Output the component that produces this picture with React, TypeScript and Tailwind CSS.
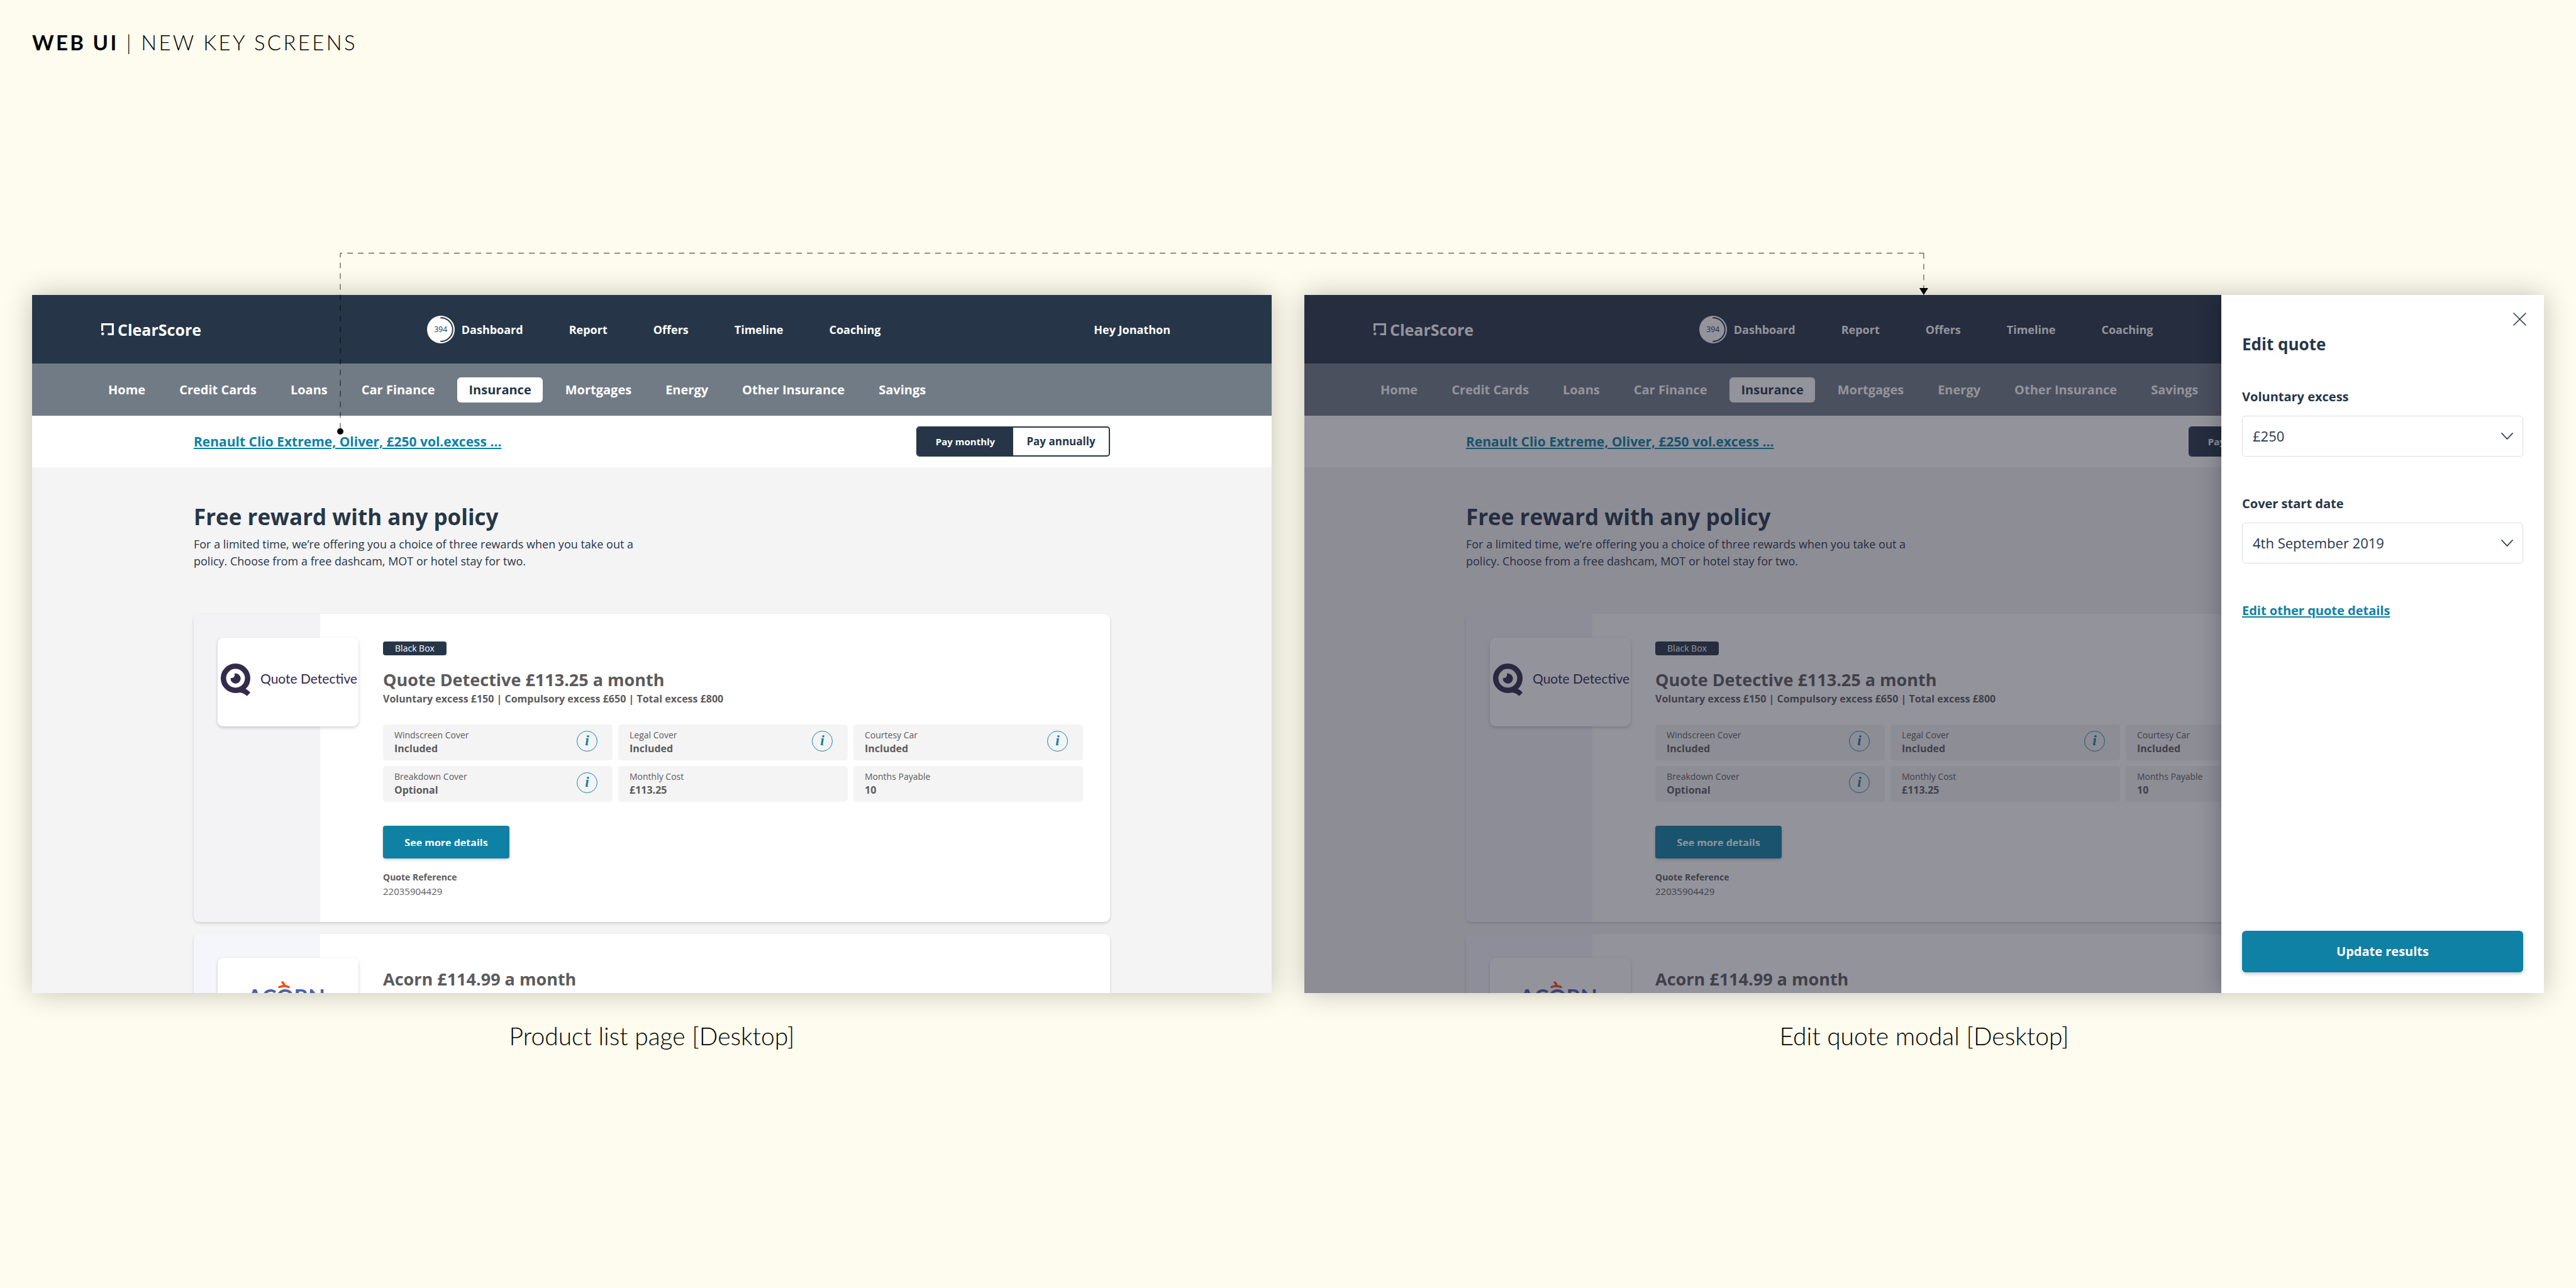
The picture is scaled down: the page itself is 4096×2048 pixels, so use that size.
import React from "react";

const NAV = ["Report", "Offers", "Timeline", "Coaching"];
const CATEGORIES = [
  "Home",
  "Credit Cards",
  "Loans",
  "Car Finance",
  "Insurance",
  "Mortgages",
  "Energy",
  "Other Insurance",
  "Savings",
];

type Feature = { label: string; value: string; info?: boolean };

type Quote = { features: Feature[]; reference: string };

const QUOTE_DETECTIVE: Quote = {
  reference: "22035904429",
  features: [
    { label: "Windscreen Cover", value: "Included", info: true },
    { label: "Legal Cover", value: "Included", info: true },
    { label: "Courtesy Car", value: "Included", info: true },
    { label: "Breakdown Cover", value: "Optional", info: true },
    { label: "Monthly Cost", value: "£113.25" },
    { label: "Months Payable", value: "10" },
  ],
};

function BrandMark() {
  return (
    <svg viewBox="0 0 20 19" className="h-[19px] w-5" fill="#fff" aria-hidden="true">
      <path d="M0 0H20V19H10.500V15.700H16.800V3.200H3.100V12H0Z" />
      <circle cx="2.300" cy="16.700" r="2.300" />
    </svg>
  );
}

function ScoreDial() {
  return (
    <span className="relative flex size-11 items-center justify-center">
      <svg viewBox="0 0 44 44" className="absolute inset-0 size-11" aria-hidden="true">
        <circle cx="22" cy="22" r="22" fill="#fff" />
        <path d="M22 3.200A18.800 18.800 0 0 1 22 40.800" fill="none" stroke="#263648" strokeWidth="2" strokeLinecap="round" />
      </svg>
      <span className="relative text-xs leading-none font-normal text-[#263648]">394</span>
    </span>
  );
}

function QuoteDetectiveLogo() {
  return (
    <span className="flex items-center gap-4 pb-2 pl-[5px]">
      <svg viewBox="0 0 66 73" className="h-[52px] w-[47px] shrink-0" aria-hidden="true">
        <circle cx="33" cy="33" r="27" fill="none" stroke="#322b4b" strokeWidth="12" />
        <path d="M30 59.500C40 59 46 60 51 57L54.500 56C58 57.500 62 60 66 65L58.500 72.500C52 67.500 48 65 40 65L30 65Z" fill="#322b4b" />
        <path d="M31 22.500A11.300 11.300 0 1 1 22 32.500Q26 33 29.500 30.500Q32 27.500 31 22.500Z" fill="#322b4b" />
      </svg>
      <span className="pb-1 font-['Lato',sans-serif] text-[21px] leading-6 whitespace-nowrap text-[#322b4b]">
        Quote Detective
      </span>
    </span>
  );
}

function AcornLogo() {
  return (
    <svg viewBox="0 0 224 140" className="h-[140px] w-[224px]" aria-label="Acorn" role="img">
      <path d="M98 45.500Q106 42 113 45.500" fill="none" stroke="#fe4a0c" strokeWidth="3.500" strokeLinecap="round" />
      <path d="M103 38Q106 40 106 44" fill="none" stroke="#fe4a0c" strokeWidth="3.500" strokeLinecap="round" />
      <text x="47" y="74" fontFamily="Lato, sans-serif" fontWeight="700" fontSize="35" fill="#4a5fb4">
        ACORN
      </text>
    </svg>
  );
}

function InfoButton({ label }: { label: string }) {
  return (
    <button
      type="button"
      aria-label={`About ${label}`}
      className="mt-[3px] flex size-[33px] items-center justify-center rounded-full border border-[#1586a8] pb-[2px] font-['Liberation_Serif',serif] text-[23px] leading-none font-bold text-[#0f81a4] italic"
    >
      i
    </button>
  );
}

function QuoteCard({
  title,
  badge,
  stripClass,
  logo,
  quote,
}: {
  title: string;
  badge?: string;
  stripClass: string;
  logo: React.ReactNode;
  quote?: Quote;
}) {
  return (
    <article className="relative flex rounded-[9px] bg-white text-[#5b5b5b] shadow-[0_2px_4px_rgba(0,0,0,0.16)]">
      <div className={`w-[201px] shrink-0 rounded-l-[9px] pt-[38px] pl-[38px] ${stripClass}`}>
        <div className="relative flex h-[141px] w-[224px] items-center rounded-[9px] bg-white shadow-[0_2px_5px_rgba(0,0,0,0.2)]">
          {logo}
        </div>
      </div>
      <div className={`min-w-0 flex-1 pr-[43px] pb-[38px] pl-[100px] ${badge ? "pt-11" : "pt-14"}`}>
        {badge && (
          <span className="mb-[23px] flex h-[22px] w-[101px] items-center justify-center rounded bg-[#263648] text-sm leading-none text-white">
            {badge}
          </span>
        )}
        <h3 className="text-[27px] leading-8 font-bold">{title}</h3>
        <p className="mt-1 text-base leading-5 font-bold">
          Voluntary excess £150 | Compulsory excess £650 | Total excess £800
        </p>
        {quote && (
          <>
            <dl className="mt-[31px] grid grid-cols-3 gap-[9px]">
              {quote.features.map((f) => (
                <div key={f.label} className="flex justify-between rounded-[5px] bg-[#f4f4f4] py-[7px] pr-6 pl-[18px]">
                  <div>
                    <dt className="text-sm leading-5">{f.label}</dt>
                    <dd className="text-base leading-[23px] font-bold">{f.value}</dd>
                  </div>
                  {f.info && <InfoButton label={f.label} />}
                </div>
              ))}
            </dl>
            <button
              type="button"
              className="mt-[38px] flex h-[52px] w-[201px] items-center justify-center rounded bg-[#0f81a4] text-base font-bold text-white shadow-[0_2px_4px_rgba(0,0,0,0.2)]"
            >
              <span className="block h-[11px] overflow-hidden leading-6">
                <span className="-mt-[6px] block">See more details</span>
              </span>
            </button>
            <p className="mt-[19px] text-sm leading-[22px] font-bold">Quote Reference</p>
            <p className="text-[15px] leading-[22px]">{quote.reference}</p>
          </>
        )}
      </div>
    </article>
  );
}

function ProductPage() {
  return (
    <div className="font-['Open_Sans',sans-serif] text-[#263648]">
      <header className="flex h-[109px] items-center justify-between bg-[#263648] pr-[161px] pl-[110px] text-lg font-bold text-white">
        <a href="#home" className="flex items-center gap-[6px] pr-5 text-[25px] leading-8">
          <BrandMark />
          ClearScore
        </a>
        <nav className="flex items-center gap-[73px]">
          <a href="#dashboard" className="flex items-center gap-[11px]">
            <ScoreDial />
            Dashboard
          </a>
          {NAV.map((n) => (
            <a key={n} href={`#${n.toLowerCase()}`}>
              {n}
            </a>
          ))}
        </nav>
        <a href="#account">Hey Jonathon</a>
      </header>
      <nav className="flex h-[83px] items-center gap-[18px] bg-[#717b85] pl-[103px] text-xl font-bold whitespace-nowrap text-white">
        {CATEGORIES.map((c) =>
          c === "Insurance" ? (
            <a key={c} href="#insurance" aria-current="page" className="rounded-md bg-white px-[18px] py-[6px] text-[#263648]">
              {c}
            </a>
          ) : (
            <a key={c} href="#category" className="px-[18px] py-[6px]">
              {c}
            </a>
          ),
        )}
      </nav>
      <div className="flex h-[82px] items-center justify-between bg-white px-[257px]">
        <a href="#quote" className="text-[21px] leading-7 font-bold text-[#0f81a4] underline decoration-2 underline-offset-2">
          Renault Clio Extreme, Oliver, £250 vol.excess ...
        </a>
        <div className="grid h-12 w-[308px] grid-cols-2 overflow-hidden rounded-[5px] border-2 border-[#263648] font-bold">
          <button type="button" aria-pressed="true" className="bg-[#263648] text-[15px] text-white">
            Pay monthly
          </button>
          <button type="button" aria-pressed="false" className="text-[17px]">
            Pay annually
          </button>
        </div>
      </div>
      <main className="bg-[#f4f4f4] px-[257px] pt-[59px]">
        <h2 className="text-[35px] leading-10 font-bold">Free reward with any policy</h2>
        <p className="mt-[10px] max-w-[740px] text-lg leading-[27px]">
          For a limited time, we’re offering you a choice of three rewards when you take out a policy. Choose from a free
          dashcam, MOT or hotel stay for two.
        </p>
        <div className="mt-[70px] flex flex-col gap-[19px]">
          <QuoteCard
            title="Quote Detective £113.25 a month"
            badge="Black Box"
            stripClass="bg-[#f3f3f5]"
            logo={<QuoteDetectiveLogo />}
            quote={QUOTE_DETECTIVE}
          />
          <QuoteCard title="Acorn £114.99 a month" stripClass="bg-[#f5f6fb]" logo={<AcornLogo />} />
        </div>
      </main>
    </div>
  );
}

function SelectField({ id, label, value }: { id: string; label: string; value: string }) {
  return (
    <div>
      <label htmlFor={id} className="block text-xl leading-7 font-bold">
        {label}
      </label>
      <div className="relative mt-4">
        <select
          id={id}
          defaultValue={value}
          className="block h-[65px] w-full appearance-none rounded-[5px] border border-[#dcdddf] bg-white pr-14 pl-4 text-[22px]"
        >
          <option>{value}</option>
        </select>
        <svg
          viewBox="0 0 19 11"
          className="pointer-events-none absolute top-[27px] right-4 h-[11px] w-[19px]"
          fill="none"
          stroke="#263648"
          strokeWidth="1.800"
          strokeLinecap="round"
          strokeLinejoin="round"
          aria-hidden="true"
        >
          <path d="M1 1L9.500 10L18 1" />
        </svg>
      </div>
    </div>
  );
}

function EditQuotePanel() {
  return (
    <aside
      role="dialog"
      aria-label="Edit quote"
      className="absolute inset-y-0 right-0 flex w-[513px] flex-col bg-white px-[33px] pt-7 pb-[33px] font-['Open_Sans',sans-serif] text-[#263648] shadow-[0_0_36px_rgba(0,0,0,0.3)]"
    >
      <button type="button" aria-label="Close" className="-mr-[5px] size-[21px] self-end">
        <svg viewBox="0 0 21 21" className="size-[21px]" stroke="#263648" strokeWidth="1.500" strokeLinecap="round" aria-hidden="true">
          <path d="M1 1L20 20M20 1L1 20" />
        </svg>
      </button>
      <h2 className="mt-[13px] text-[26px] leading-8 font-bold">Edit quote</h2>
      <div className="mt-[54px] flex flex-col gap-[61px]">
        <SelectField id="voluntary-excess" label="Voluntary excess" value="£250" />
        <SelectField id="cover-start" label="Cover start date" value="4th September 2019" />
        <a href="#details" className="self-start text-xl leading-7 font-bold text-[#0f81a4] underline decoration-2 underline-offset-2">
          Edit other quote details
        </a>
      </div>
      <button
        type="button"
        className="mt-auto h-[66px] w-full rounded-md bg-[#0f81a4] text-xl font-bold text-white shadow-[0_3px_5px_rgba(0,0,0,0.2)]"
      >
        Update results
      </button>
    </aside>
  );
}

function Frame({ caption, children }: { caption: string; children: React.ReactNode }) {
  return (
    <figure className="min-w-0 flex-1">
      <div className="relative aspect-[1971/1110] overflow-hidden bg-[#f4f4f4] shadow-[0_0_42px_rgba(0,0,0,0.24)]">{children}</div>
      <figcaption className="mt-[46px] text-center text-[39px] leading-[44px] font-light text-black">{caption}</figcaption>
    </figure>
  );
}

/* Dashed flow line from the quote link up and across to the modal screen. */
function Connector() {
  return (
    <svg className="pointer-events-none absolute inset-x-0 -top-[67px] h-[290px] w-full" aria-hidden="true">
      <g stroke="#000" strokeOpacity="0.8" strokeDasharray="9 8">
        <line x1="12.270%" y1="0.500" x2="12.270%" y2="284" strokeDashoffset="2" />
        <line x1="12.270%" y1="0.500" x2="75.310%" y2="0.500" strokeDashoffset="6" />
        <line x1="75.310%" y1="0.500" x2="75.310%" y2="58" />
      </g>
      <circle cx="12.270%" cy="284" r="5" />
      <svg x="75.310%" y="56" className="overflow-visible">
        <path d="M-7 0H7L0 11Z" />
      </svg>
    </svg>
  );
}

export default function App() {
  return (
    <div className="min-h-screen bg-[#fefcee] px-[51px] pt-[47px] font-['Lato',sans-serif]">
      <h1 className="text-[33px] leading-10 font-light tracking-widest text-black">
        <strong className="font-bold">WEB UI</strong> | NEW KEY SCREENS
      </h1>
      <div className="relative mt-[382px] flex gap-[52px]">
        <Frame caption="Product list page [Desktop]">
          <ProductPage />
        </Frame>
        <Frame caption="Edit quote modal [Desktop]">
          <ProductPage />
          <div className="absolute inset-0 bg-[rgb(36_36_54/0.493)]" />
          <EditQuotePanel />
        </Frame>
        <Connector />
      </div>
    </div>
  );
}
